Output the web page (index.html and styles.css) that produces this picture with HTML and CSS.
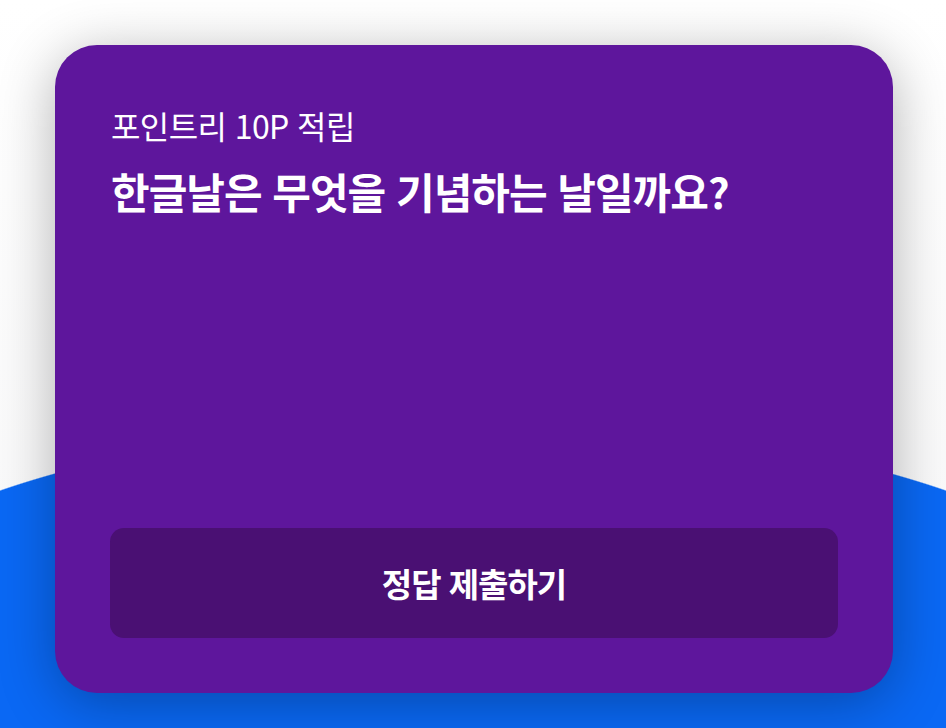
FILE: index.html
```html
<!DOCTYPE html>
<html lang="ko">
<head>
<meta charset="utf-8">
<title>퀴즈</title>
<link rel="stylesheet" href="styles.css">
</head>
<body>
<main class="stage">
  <section class="card">
    <div class="card-head">
      <p class="reward">포인트리 10P 적립</p>
      <h1 class="question">한글날은 무엇을 기념하는 날일까요?</h1>
    </div>
    <button class="submit" type="button">정답 제출하기</button>
  </section>
</main>
</body>
</html>
```
FILE: styles.css
```css
html, body {
  margin: 0;
  padding: 0;
  height: 100%;
}
body {
  background:
    radial-gradient(ellipse 700px 262px at 473px 683px, #0a68f4 99.6%, rgba(10,104,244,0) 100%),
    linear-gradient(#ffffff, #f7f7f8);
  font-family: "Noto Sans CJK KR", "Noto Sans", sans-serif;
  overflow: hidden;
}
.stage {
  box-sizing: border-box;
  width: 946px;
  height: 728px;
  padding: 45px 53px 35px 55px;
}
.card {
  box-sizing: border-box;
  height: 648px;
  background: #5e169c;
  border-radius: 42px;
  padding: 58px 55px 55px 55px;
  display: flex;
  flex-direction: column;
  justify-content: space-between;
  box-shadow: 0 10px 56px rgba(0, 0, 0, 0.3);
}
.card-head {
  display: flex;
  flex-direction: column;
  gap: 16px;
  padding-left: 1px;
}
.reward {
  margin: 0;
  color: #ffffff;
  font-size: 32px;
  line-height: 44px;
  font-weight: 400;
  letter-spacing: -0.6px;
}
.question {
  margin: 0;
  color: #ffffff;
  font-size: 42px;
  line-height: 56px;
  font-weight: 700;
  letter-spacing: -1px;
}
.submit {
  height: 110px;
  border: 0;
  border-radius: 14px;
  background: #4a1073;
  color: #ffffff;
  font-family: inherit;
  font-size: 33px;
  font-weight: 700;
  letter-spacing: -1px;
  padding: 0;
}
```
